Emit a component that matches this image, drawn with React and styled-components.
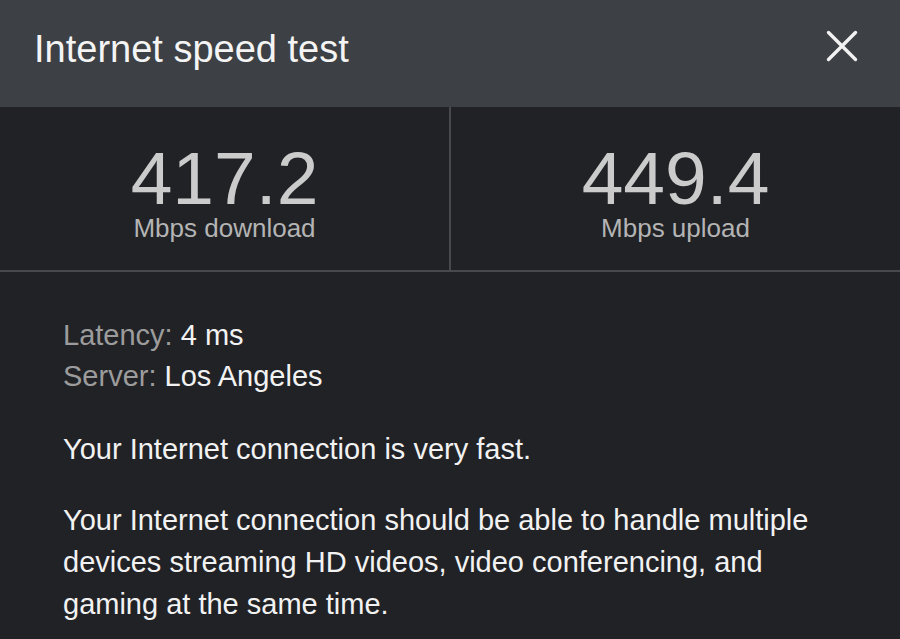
import styled, { createGlobalStyle } from "styled-components";

const GlobalStyle = createGlobalStyle`
  html, body {
    margin: 0;
    padding: 0;
    background: #212226;
  }
  body {
    font-family: "Liberation Sans", Arial, sans-serif;
  }
`;

const Page = styled.div`
  width: 900px;
  height: 639px;
  background: #212226;
  overflow: hidden;
`;

const Header = styled.header`
  height: 107px;
  background: #3d4044;
  display: flex;
  align-items: center;
  justify-content: space-between;
  padding: 0 42px 8px 34px;
  box-sizing: border-box;
`;

const Title = styled.h1`
  margin: 0;
  font-size: 38px;
  font-weight: 400;
  color: #f4f4f4;
`;

const CloseButton = styled.button`
  background: none;
  border: 0;
  padding: 0;
  width: 32px;
  height: 32px;
  margin-bottom: 8px;
  display: flex;
  align-items: center;
  justify-content: center;
  cursor: pointer;
`;

const Stats = styled.section`
  display: grid;
  grid-template-columns: 449px 2px 1fr;
  height: 163px;
  border-bottom: 2px solid #48494c;
`;

const Divider = styled.div`
  background: #48494c;
`;

const Stat = styled.div`
  display: flex;
  flex-direction: column;
  align-items: center;
  padding-top: 34px;
`;

const Value = styled.div`
  font-size: 75px;
  line-height: 75px;
  color: #cbcbcb;
`;

const Unit = styled.div`
  font-size: 26px;
  line-height: 24px;
  color: #b4b4b4;
`;

const Body = styled.section`
  padding: 43px 40px 0 63px;
`;

const Details = styled.div`
  font-size: 29px;
  line-height: 41px;
  margin-bottom: 31px;
`;

const DetailRow = styled.div`
  color: #f2f2f2;
`;

const Label = styled.span`
  color: #9c9c9c;
`;

const Paragraph = styled.p`
  margin: 0 0 29px;
  font-size: 29px;
  line-height: 42px;
  color: #f2f2f2;
  max-width: 790px;
`;

function CloseIcon() {
  return (
    <svg width="32" height="32" viewBox="0 0 32 32" fill="none">
      <path
        d="M2.5 2.5L29.5 29.5M29.5 2.5L2.5 29.5"
        stroke="#f2f2f2"
        strokeWidth="3.4"
        strokeLinecap="round"
      />
    </svg>
  );
}

export default function App() {
  return (
    <Page>
      <GlobalStyle />
      <Header>
        <Title>Internet speed test</Title>
        <CloseButton aria-label="Close">
          <CloseIcon />
        </CloseButton>
      </Header>
      <Stats>
        <Stat>
          <Value>417.2</Value>
          <Unit>Mbps download</Unit>
        </Stat>
        <Divider />
        <Stat>
          <Value>449.4</Value>
          <Unit>Mbps upload</Unit>
        </Stat>
      </Stats>
      <Body>
        <Details>
          <DetailRow>
            <Label>Latency:</Label> 4 ms
          </DetailRow>
          <DetailRow>
            <Label>Server:</Label> Los Angeles
          </DetailRow>
        </Details>
        <Paragraph>Your Internet connection is very fast.</Paragraph>
        <Paragraph>
          Your Internet connection should be able to handle multiple devices
          streaming HD videos, video conferencing, and gaming at the same time.
        </Paragraph>
      </Body>
    </Page>
  );
}
